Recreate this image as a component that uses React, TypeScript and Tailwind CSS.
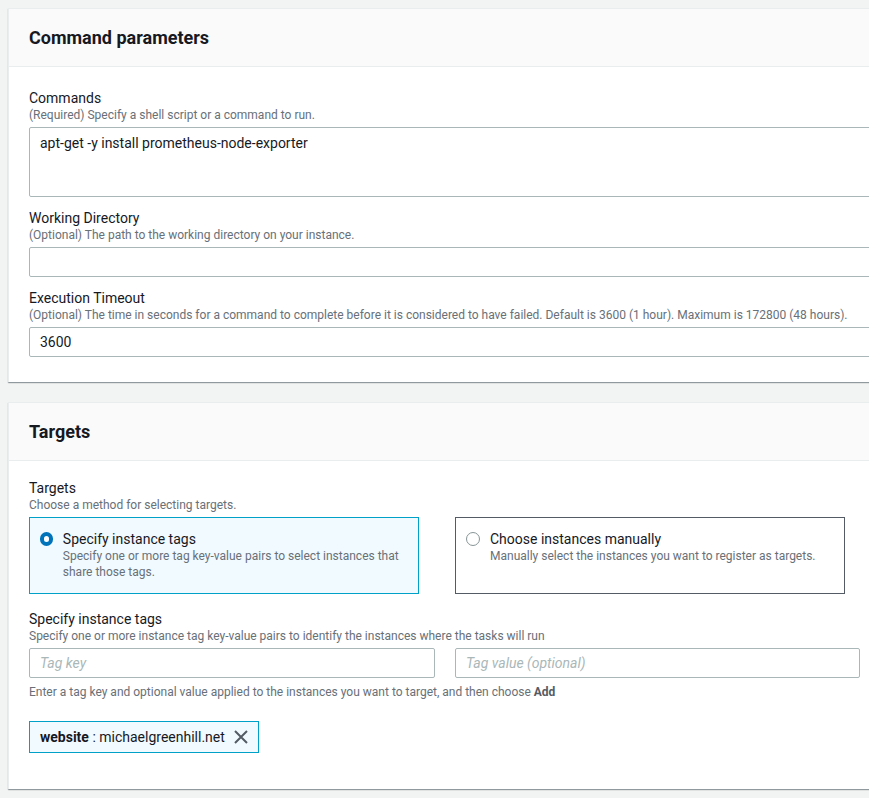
export default function App() {
  const f = { fontFamily: 'Roboto, "Liberation Sans", sans-serif' };
  const label = "text-[14px] leading-[18px] text-[#16191f]";
  const desc = "text-[12px] leading-[16px] text-[#687078]";
  const input = "mt-[4px] h-[30px] border border-[#aab7b8] rounded-[2px] bg-white px-[10px] flex items-center text-[14px] text-[#16191f]";
  return (
    <div style={f} className="w-[869px] h-[798px] overflow-hidden bg-[#f2f3f3] pt-[8px] pl-[8px]">
      <div className="w-[890px] bg-white shadow-[0_1px_1px_0_rgba(0,28,36,0.3),1px_1px_1px_0_rgba(0,28,36,0.15)] border-t border-l border-[#eaeded]">
        <div className="h-[58px] bg-[#fafafa] border-b border-[#eaeded] px-[20px] flex items-center text-[18px] font-bold text-[#16191f]">Command parameters</div>
        <div className="px-[20px] pt-[22px] pb-[25px]">
          <div className={label}>Commands</div>
          <div className={desc}>(Required) Specify a shell script or a command to run.</div>
          <div className="mt-[4px] h-[70px] border border-[#aab7b8] rounded-[2px] px-[10px] pt-[5px] text-[14px] text-[#16191f]">apt-get -y install prometheus-node-exporter</div>
          <div className={label + " mt-[12px]"}>Working Directory</div>
          <div className={desc}>(Optional) The path to the working directory on your instance.</div>
          <div className={input}></div>
          <div className={label + " mt-[12px]"}>Execution Timeout</div>
          <div className={desc + " whitespace-nowrap"}>(Optional) The time in seconds for a command to complete before it is considered to have failed. Default is 3600 (1 hour). Maximum is 172800 (48 hours).</div>
          <div className={input}>3600</div>
        </div>
      </div>
      <div className="mt-[20px] w-[890px] bg-white shadow-[0_1px_1px_0_rgba(0,28,36,0.3),1px_1px_1px_0_rgba(0,28,36,0.15)] border-t border-l border-[#eaeded]">
        <div className="h-[58px] bg-[#fafafa] border-b border-[#eaeded] px-[20px] flex items-center text-[18px] font-bold text-[#16191f]">Targets</div>
        <div className="px-[20px] pt-[18px] pb-[36px]">
          <div className={label}>Targets</div>
          <div className={desc}>Choose a method for selecting targets.</div>
          <div className="mt-[4px] flex gap-[36px]">
            <div className="w-[390px] h-[77px] border border-[#00a1c9] bg-[#f1faff] flex px-[10px] pt-[12px]">
              <div className="w-[14px] h-[14px] rounded-full border-[4px] border-[#0073bb] bg-white mt-[2px]"></div>
              <div className="ml-[10px]">
                <div className="text-[14px] leading-[18px] text-[#16191f]">Specify instance tags</div>
                <div className="text-[12px] leading-[16px] text-[#687078]">Specify one or more tag key-value pairs to select instances that share those tags.</div>
              </div>
            </div>
            <div className="w-[390px] h-[77px] border border-[#545b64] flex px-[10px] pt-[12px]">
              <div className="w-[14px] h-[14px] rounded-full border border-[#879596] bg-white mt-[2px]"></div>
              <div className="ml-[10px]">
                <div className="text-[14px] leading-[18px] text-[#16191f]">Choose instances manually</div>
                <div className="text-[12px] leading-[16px] text-[#687078]">Manually select the instances you want to register as targets.</div>
              </div>
            </div>
          </div>
          <div className={label + " mt-[16px]"}>Specify instance tags</div>
          <div className={desc}>Specify one or more instance tag key-value pairs to identify the instances where the tasks will run</div>
          <div className="flex gap-[20px]">
            <div className={input + " w-[406px] italic text-[#aab7b8]"}>Tag key</div>
            <div className={input + " w-[405px] italic text-[#aab7b8]"}>Tag value (optional)</div>
          </div>
          <div className={desc + " mt-[6px]"}>Enter a tag key and optional value applied to the instances you want to target, and then choose <b className="text-[#545b64]">Add</b></div>
          <div className="mt-[21px] inline-flex items-center h-[32px] border border-[#00a1c9] bg-[#f1faff] px-[10px] text-[14px] text-[#16191f]">
            <b>website</b>&nbsp;: michaelgreenhill.net
            <svg width="14" height="14" viewBox="0 0 14 14" className="ml-[9px]"><path d="M1 1L13 13M13 1L1 13" stroke="#545b64" strokeWidth="2" /></svg>
          </div>
        </div>
      </div>
    </div>
  );
}
